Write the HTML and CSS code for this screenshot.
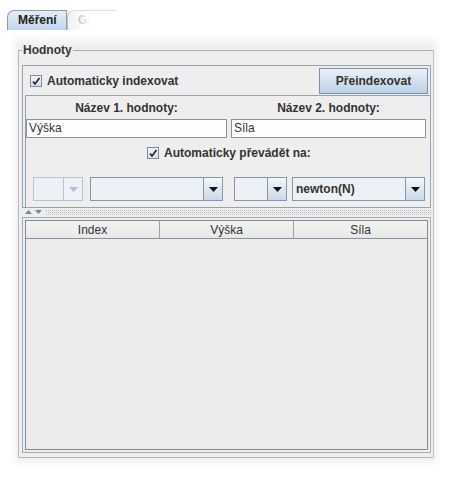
FILE: index.html
```html
<!DOCTYPE html>
<html lang="cs">
<head>
<meta charset="utf-8">
<title>Měření</title>
<link rel="stylesheet" href="styles.css">
</head>
<body>
<div class="frame">
  <div class="tabs">
    <div class="tab active">Měření</div>
    <div class="tab faded">Graf</div>
  </div>
  <div class="pane">
    <fieldset class="group">
      <legend>Hodnoty</legend>
      <div class="top">
        <div class="row1">
          <div class="chk">
            <span class="box"><svg width="10" height="10" viewBox="0 0 10 10"><path d="M2 5.5 L4 8 L8.5 2" fill="none" stroke="#222" stroke-width="1.6"/></svg></span>
            <span>Automaticky indexovat</span>
          </div>
          <div class="btn">Přeindexovat</div>
        </div>
        <div class="sub">
          <div class="names">
            <div class="col c1">
              <div class="lbl">Název 1. hodnoty:</div>
              <div class="field">Výška</div>
            </div>
            <div class="col c2">
              <div class="lbl">Název 2. hodnoty:</div>
              <div class="field">Síla</div>
            </div>
          </div>
          <div class="conv">
            <div class="chk">
              <span class="box"><svg width="10" height="10" viewBox="0 0 10 10"><path d="M2 5.5 L4 8 L8.5 2" fill="none" stroke="#222" stroke-width="1.6"/></svg></span>
              <span>Automaticky převádět na:</span>
            </div>
          </div>
          <div class="combos">
            <div class="combo disabled w1"><span class="val"></span><span class="arr"><svg width="9" height="5" viewBox="0 0 9 5"><path d="M0 0 H9 L4.5 5 Z" fill="#a9c3dc"/></svg></span></div>
            <div class="combo w2"><span class="val"></span><span class="arr"><svg width="9" height="5" viewBox="0 0 9 5"><path d="M0 0 H9 L4.5 5 Z" fill="#111"/></svg></span></div>
            <div class="combo w3"><span class="val"></span><span class="arr"><svg width="9" height="5" viewBox="0 0 9 5"><path d="M0 0 H9 L4.5 5 Z" fill="#111"/></svg></span></div>
            <div class="combo w4"><span class="val">newton(N)</span><span class="arr"><svg width="9" height="5" viewBox="0 0 9 5"><path d="M0 0 H9 L4.5 5 Z" fill="#111"/></svg></span></div>
          </div>
        </div>
      </div>
      <div class="divider">
        <svg width="20" height="5" viewBox="0 0 20 5"><path d="M0 4 L3.5 0 L7 4 Z" fill="#6a88a8"/><path d="M10 0 H17 L13.5 4 Z" fill="#6a88a8"/></svg>
        <span class="dots"></span>
      </div>
      <div class="scroll">
        <div class="table">
          <div class="thead">
            <div class="th">Index</div>
            <div class="th">Výška</div>
            <div class="th">Síla</div>
          </div>
          <div class="tbody"></div>
        </div>
      </div>
    </fieldset>
  </div>
</div>
</body>
</html>
```

FILE: styles.css
```css
* { box-sizing: border-box; }
html, body { margin: 0; padding: 0; background: #fff; }
body {
  font-family: "Liberation Sans", Arial, sans-serif;
  font-size: 12px;
  color: #333;
}
.frame {
  width: 453px;
  height: 478px;
  position: relative;
  overflow: hidden;
}
.tabs {
  display: flex;
  padding: 10px 0 0 7px;
  height: 30px;
}
.tab {
  height: 20px;
  line-height: 18px;
  font-weight: bold;
  padding: 0 9px 0 10px;
  border: 1px solid #8e9cab;
  border-bottom: none;
  border-top-left-radius: 7px;
}
.tab.active {
  width: 60px;
  background: linear-gradient(#e3ecf7, #c4d7ec);
  color: #222;
}
.tab.faded {
  position: relative;
  width: 50px;
  border-left: 1px solid #b9c3cc;
  border-top-color: #d8dde2;
  border-right: none;
  color: #9aa;
  background: linear-gradient(90deg, #f2f2f2, #fff 60%);
}
.tab.faded::after {
  content: "";
  position: absolute;
  inset: 0;
  background: linear-gradient(90deg, rgba(255,255,255,0) 10%, #fff 45%);
}
.pane {
  position: relative;
  margin-left: 10px;
  width: 432px;
  height: 438px;
  background: #eeeeee;
  padding: 13px 0 0 8px;
}
.pane::after {
  content: "";
  position: absolute;
  inset: 0;
  pointer-events: none;
  box-shadow:
    inset 0 14px 10px -4px #fff,
    inset 7px 0 7px -2px #fff,
    inset -8px 0 7px -2px #fff,
    inset 0 -8px 7px -2px #fff;
}
.group {
  margin: 0;
  width: 416px;
  height: 415px;
  border: 1px solid #a6adb4;
  padding: 8px 2px 4px 3px;
  display: flex;
  flex-direction: column;
}
.group legend {
  padding: 0 1px;
  font-weight: bold;
  line-height: 14px;
  color: #333;
}
.top {
  height: 143px;
  border: 1px solid #96a1ac;
  display: flex;
  flex-direction: column;
}
.row1 {
  height: 29px;
  display: flex;
  align-items: center;
  justify-content: space-between;
  padding: 0 2px 0 7px;
}
.chk {
  display: flex;
  align-items: center;
  gap: 5px;
  font-weight: bold;
  line-height: 14px;
}
.box {
  width: 12px;
  height: 12px;
  border: 1px solid #7d8d9c;
  background: linear-gradient(#f3f6fa, #d3e0ee);
  display: flex;
  align-items: center;
  justify-content: center;
}
.btn {
  width: 109px;
  height: 26px;
  border: 1px solid #7f90a2;
  background: linear-gradient(#eaf1f8, #bcd1e6);
  font-weight: bold;
  display: flex;
  align-items: center;
  justify-content: center;
  color: #333;
}
.sub {
  flex: 1;
  margin-left: 2px;
  border-top: 1px solid #96a1ac;
  border-left: 1px solid #96a1ac;
  padding: 5px 3px 0 0;
  display: flex;
  flex-direction: column;
}
.names {
  display: flex;
  gap: 4px;
}
.col {
  display: flex;
  flex-direction: column;
  gap: 4px;
}
.c1 { width: 201px; }
.c2 { width: 195px; }
.lbl {
  text-align: center;
  font-weight: bold;
  line-height: 14px;
}
.field {
  height: 19px;
  border: 1px solid #8394a5;
  background: #fff;
  padding-left: 2px;
  line-height: 17px;
  color: #333;
}
.conv {
  margin-top: 8px;
  padding-left: 121px;
  height: 14px;
  display: flex;
  align-items: center;
}
.combos {
  margin-top: 17px;
  display: flex;
  padding-left: 7px;
}
.combo {
  height: 24px;
  border: 1px solid #8797a8;
  background: #edf1f5;
  display: flex;
}
.combo .val {
  flex: 1;
  font-weight: bold;
  line-height: 22px;
  padding-left: 3px;
}
.combo .arr {
  width: 19px;
  border-left: 1px solid #8797a8;
  background: linear-gradient(#f3f7fb, #c9d9ea);
  display: flex;
  align-items: center;
  justify-content: center;
}
.combo.disabled { border-color: #b6c5d4; }
.combo.disabled .arr { border-left-color: #b6c5d4; background: #eef2f6; }
.w1 { width: 50px; }
.w2 { width: 133px; margin-left: 7px; }
.w3 { width: 53px; margin-left: 11px; }
.w4 { width: 133px; margin-left: 5px; }
.divider {
  height: 9px;
  display: flex;
  align-items: center;
  gap: 1px;
  padding-left: 3px;
}
.divider svg { flex: none; }
.dots {
  flex: 1;
  height: 5px;
  background-image:
    linear-gradient(90deg, #b4bcc4 1px, transparent 1px);
  background-size: 2px 2px;
  -webkit-mask-image: linear-gradient(#000 1px, transparent 1px);
  mask-image: linear-gradient(#000 1px, transparent 1px);
  -webkit-mask-size: 2px 2px;
  mask-size: 2px 2px;
}
.scroll {
  flex: 1;
  border: 1px solid #a3abb3;
  padding: 2px;
}
.table {
  height: 100%;
  border: 1px solid #7f8a95;
  display: flex;
  flex-direction: column;
  background: #ececec;
}
.thead {
  display: flex;
  height: 18px;
  border-bottom: 1px solid #8792a0;
  background: linear-gradient(#f2f2f2, #e8e8e8);
}
.th {
  flex: 1;
  text-align: center;
  line-height: 19px;
  color: #333;
  border-right: 1px solid #9aa4ae;
}
.th:last-child { border-right: none; }
.tbody { flex: 1; }
```
